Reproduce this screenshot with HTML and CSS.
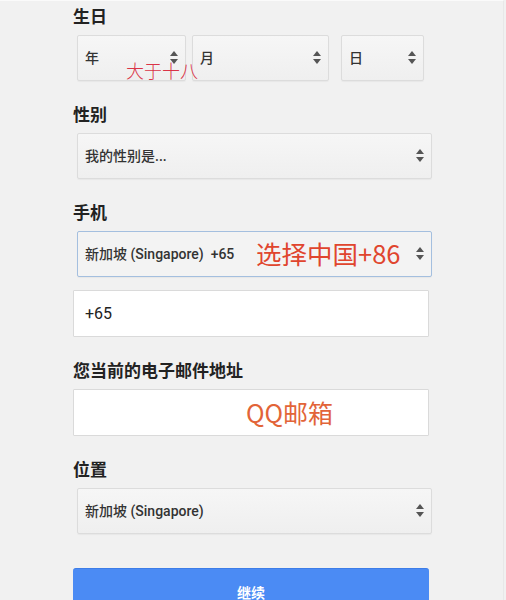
FILE: index.html
```html
<!DOCTYPE html>
<html lang="zh">
<head>
  <meta charset="UTF-8" />
  <meta name="viewport" content="width=device-width, initial-scale=1" />
  <title>注册</title>
  <link rel="stylesheet" href="styles.css">
</head>
<body>
  <div class="page">
    <form class="signup">

      <div class="group">
        <label class="label">生日</label>
        <div class="birthday">
          <span class="select-wrap year"><select><option>年</option></select></span>
          <span class="select-wrap month"><select><option>月</option></select></span>
          <span class="select-wrap day"><select><option>日</option></select></span>
          <span class="note note-age">大于十八</span>
        </div>
      </div>

      <div class="group">
        <label class="label">性别</label>
        <span class="select-wrap full"><select><option>我的性别是...</option></select></span>
      </div>

      <div class="group">
        <label class="label">手机</label>
        <span class="select-wrap full focused">
          <select><option>新加坡 (Singapore) &nbsp;+65</option></select>
          <span class="note note-phone">选择中国+86</span>
        </span>
        <div class="input-wrap phone">
          <input type="text" value="+65" />
        </div>
      </div>

      <div class="group">
        <label class="label">您当前的电子邮件地址</label>
        <div class="input-wrap">
          <input type="email" value="" />
          <span class="note note-mail">QQ邮箱</span>
        </div>
      </div>

      <div class="group last">
        <label class="label">位置</label>
        <span class="select-wrap full"><select><option>新加坡 (Singapore)</option></select></span>
      </div>

      <button type="submit" class="continue">继续</button>
    </form>
  </div>
</body>
</html>
```

FILE: styles.css
```css
body {
  margin: 0;
  background: #f1f1f1;
  font-family: Roboto, "Noto Sans CJK SC", sans-serif;
  color: #222;
}

.page {
  border-top: 1px solid #fafafa;
  border-right: 1px solid #e8e8e8;
  width: 504px;
  min-height: 600px;
  box-sizing: border-box;
}

.signup {
  padding: 5px 0 0 73px;
  width: 356px;
}

.group {
  margin-bottom: 23px;
}

.group.last {
  margin-bottom: 34px;
}

.label {
  display: block;
  font-size: 17px;
  font-weight: bold;
  line-height: 22px;
  margin-bottom: 7px;
  color: #222;
}

/* selects */
.select-wrap {
  position: relative;
  display: block;
  margin-left: 4px;
}

.select-wrap select {
  -webkit-appearance: none;
  appearance: none;
  display: block;
  width: 100%;
  height: 46px;
  padding: 0 24px 0 7px;
  font-family: Roboto, "Noto Sans CJK SC", sans-serif;
  font-size: 14px;
  font-weight: 500;
  color: #333;
  background: linear-gradient(#f6f6f6, #efefef);
  border: 1px solid #dcdcdc;
  border-radius: 2px;
  box-shadow: 0 1px 1px rgba(0,0,0,0.04);
  outline: none;
}

.select-wrap::before,
.select-wrap::after {
  content: "";
  position: absolute;
  right: 8px;
  border-left: 4.5px solid transparent;
  border-right: 4.5px solid transparent;
  pointer-events: none;
}

.select-wrap::before {
  top: 16px;
  border-bottom: 5px solid #555;
}

.select-wrap::after {
  top: 24px;
  border-top: 5px solid #555;
}

.select-wrap.full {
  width: 355px;
}

.select-wrap.focused select {
  border-color: #a4bfdf;
  background: #f3f3f3;
}

.birthday {
  position: relative;
  display: flex;
}

.birthday .select-wrap {
  margin-left: 0;
}

.birthday .year {
  width: 109px;
  margin-left: 4px;
}

.birthday .month {
  width: 137px;
  margin-left: 6px;
}

.birthday .day {
  width: 83px;
  margin-left: 12px;
}

/* inputs */
.input-wrap {
  position: relative;
}

.input-wrap input {
  display: block;
  width: 100%;
  height: 47px;
  box-sizing: border-box;
  padding: 0 11px;
  font-family: Roboto, "Noto Sans CJK SC", sans-serif;
  font-size: 16px;
  color: #222;
  background: #fff;
  border: 1px solid #dadada;
  border-radius: 1px;
  outline: none;
}

.input-wrap.phone {
  margin-top: 13px;
}

/* red annotations over the form */
.note {
  position: absolute;
  pointer-events: none;
  font-family: "Noto Sans CJK SC", sans-serif;
  white-space: nowrap;
}

.note-age {
  left: 53px;
  top: 22px;
  font-size: 18px;
  font-weight: 300;
  color: #da3447;
}

.note-phone {
  left: 179px;
  top: 7px;
  font-size: 25.5px;
  line-height: 30px;
  color: #e0452e;
}

.note-mail {
  left: 173px;
  top: 8px;
  font-size: 25px;
  line-height: 30px;
  color: #e26438;
}

.continue {
  display: block;
  width: 356px;
  height: 46px;
  background: #4b8bf4;
  color: #fff;
  border: none;
  border-top: 1px solid #3d7de8;
  border-radius: 3px;
  font-family: "Noto Sans CJK SC", sans-serif;
  font-size: 14px;
  font-weight: bold;
  cursor: pointer;
}
```
